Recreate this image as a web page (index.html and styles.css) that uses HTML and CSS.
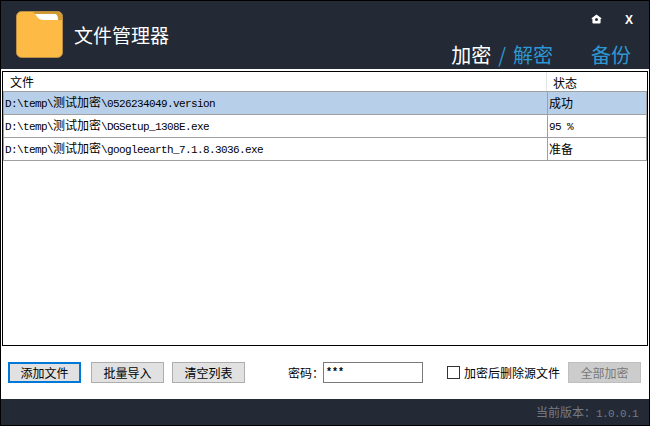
FILE: index.html
```html
<!DOCTYPE html>
<html lang="zh-CN">
<head>
<meta charset="utf-8">
<title>文件管理器</title>
<link rel="stylesheet" href="styles.css">
</head>
<body>
<div class="window">
  <header class="header">
    <div class="brand">
      <svg class="logo" width="48" height="48" viewBox="0 0 48 48">
        <rect x="0.5" y="0.5" width="46" height="46" rx="5" fill="#fdba45" stroke="#b98f45"/>
        <path d="M17 1H41Q46 1 46 6V9H27Q24 9 22 6Z" fill="#d19a30"/>
        <path d="M19 3H39Q42 3 42 9H27Q24 9 22 7Z" fill="#fff"/>
      </svg>
      <span class="app-title">文件管理器</span>
    </div>
    <div class="head-right">
      <div class="win-controls">
        <svg class="home-icon" width="11" height="10" viewBox="0 0 11 10">
          <path d="M5.5 0.5L10.5 4.2Q10.6 5 9.6 5V8.5Q9.6 9.5 8.6 9.5H2.4Q1.4 9.5 1.4 8.5V5Q0.4 5 0.5 4.2Z M5.5 4A1.5 1.5 0 1 0 5.5 7A1.5 1.5 0 1 0 5.5 4Z" fill="#fff" fill-rule="evenodd"/>
        </svg>
        <span class="close">X</span>
      </div>
      <nav class="tabs">
        <span class="tab-on">加密</span><span class="tab-sep">/</span><span class="tab">解密</span><span class="tab tab-last">备份</span>
      </nav>
    </div>
  </header>
  <main class="main">
    <div class="list">
      <div class="row head">
        <div class="col-file head-file">文件</div>
        <div class="col-state head-state">状态</div>
      </div>
      <div class="row selected">
        <div class="col-file">D:\temp\<span class="cjk">测试加密</span>\0526234049.version</div>
        <div class="col-state"><span class="cjk">成功</span></div>
      </div>
      <div class="row">
        <div class="col-file">D:\temp\<span class="cjk">测试加密</span>\DGSetup_1308E.exe</div>
        <div class="col-state col-num">95 %</div>
      </div>
      <div class="row">
        <div class="col-file">D:\temp\<span class="cjk">测试加密</span>\googleearth_7.1.8.3036.exe</div>
        <div class="col-state"><span class="cjk">准备</span></div>
      </div>
    </div>
    <div class="actions">
      <button class="btn btn-focus">添加文件</button>
      <button class="btn">批量导入</button>
      <button class="btn">清空列表</button>
      <label class="pw-label">密码：</label>
      <div class="pw-input">***</div>
      <span class="check-box"></span>
      <span class="check-label">加密后删除源文件</span>
      <button class="btn btn-disabled">全部加密</button>
    </div>
  </main>
  <footer class="footer">当前版本：<span class="version">1.0.0.1</span></footer>
</div>
</body>
</html>
```
FILE: styles.css
```css
* { box-sizing: border-box; }
html, body { margin: 0; padding: 0; }
body { width: 650px; height: 426px; overflow: hidden; font-family: "Noto Sans CJK SC", "Liberation Sans", sans-serif; background: #fff; }
.window { width: 650px; height: 426px; border: 1px solid #000; display: flex; flex-direction: column; }
.header { height: 68px; background: #232a35; display: flex; justify-content: space-between; color: #fff; flex: none; }
.brand { display: flex; align-items: center; padding: 10px 0 0 15px; height: 58px; }
.logo { display: block; }
.app-title { font-size: 19px; margin-left: 10px; color: #fff; line-height: 24px; }
.head-right { display: flex; flex-direction: column; align-items: flex-end; }
.win-controls { display: flex; align-items: center; height: 16px; margin-top: 11px; padding-right: 16px; }
.home-icon { display: block; margin-right: 23px; margin-top: -2px; }
.close { font: bold 12px "Liberation Sans", sans-serif; color: #fff; }
.tabs { display: flex; align-items: center; margin-top: 14px; padding-right: 18px; font-size: 20px; line-height: 26px; color: #2d97d3; }
.tab-on { color: #fff; }
.tab-sep { margin: 0 7px; }
.tab-last { margin-left: 38px; }
.main { flex: 1; display: flex; flex-direction: column; background: #fff; min-height: 0; }
.list { margin: 2px 1px 0 1px; height: 275px; border: 1px solid #000; background: #fff; flex: none; }
.row { display: flex; height: 23px; border-bottom: 1px solid #a0a0a0; border-left: 1px solid #a0a0a0; border-right: 1px solid #a0a0a0; font: 11px/20px "Liberation Mono", "Noto Sans CJK SC", monospace; letter-spacing: -0.6px; color: #000; white-space: nowrap; }
.row.head { height: 20px; border: 0; border-bottom: 1px solid #a0a0a0; font: 12px/19px "Noto Sans CJK SC", sans-serif; letter-spacing: 0; }
.row.selected { background: #b8cfe9; }
.col-file { width: 543px; flex: none; padding-left: 1px; }
.col-state { flex: 1; border-left: 1px solid #a0a0a0; padding-left: 1px; line-height: 22px; }
.col-num { line-height: 24px; }
.head-file { padding-left: 7px; }
.head-state { border-left: 1px solid #e3e3e3; padding-left: 6px; }
.cjk { font: 12px/20px "Noto Sans CJK SC", sans-serif; letter-spacing: 0; }
.col-state .cjk { line-height: 22px; }
.actions { flex: 1; display: flex; align-items: center; padding: 0 8px 0 7px; font-size: 12px; }
.btn { width: 73px; height: 21px; padding: 0; border: 1px solid #adadad; background: #e1e1e1; color: #000; font: 12px/17px "Noto Sans CJK SC", sans-serif; margin-right: 8px; }
.btn-focus { border: 2px solid #0078d7; margin-right: 10px; }
.pw-label { margin-left: 35px; width: 35px; color: #000; white-space: nowrap; }
.pw-input { width: 100px; height: 21px; border: 1px solid #7a7a7a; font: bold 10px/19px "Liberation Mono", monospace; padding-left: 2px; }
.check-box { width: 13px; height: 13px; border: 1px solid #333; margin-left: 24px; background: #fff; }
.check-label { margin-left: 4px; width: 101px; color: #000; white-space: nowrap; }
.btn-disabled { background: #cccccc; border-color: #bfbfbf; color: #787878; margin: 0 0 0 3px; }
.footer { height: 26px; background: #232a35; color: #757b84; flex: none; text-align: right; font-size: 12px; line-height: 25px; padding-right: 11px; }
.version { font: 11px/25px "Liberation Mono", monospace; letter-spacing: -0.6px; }
```
